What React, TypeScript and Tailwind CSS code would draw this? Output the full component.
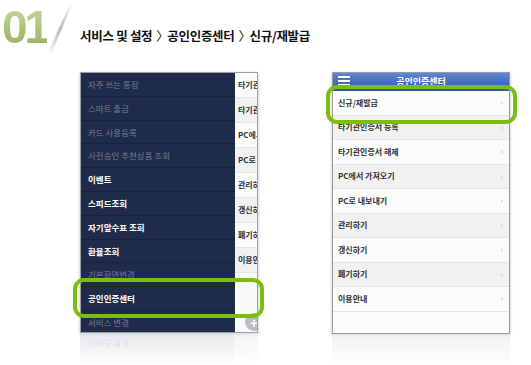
import React from "react"

const font = { fontFamily: '"Noto Sans CJK KR", "Noto Sans", sans-serif' }

// left side menu rows: [label, bold/white]
const sideMenu: [string, boolean][] = [
  ["자주 쓰는 통장", false],
  ["스마트 출금", false],
  ["카드 사용등록", false],
  ["사전승인 추천상품 조회", false],
  ["이벤트", true],
  ["스피드조회", true],
  ["자기앞수표 조회", true],
  ["환율조회", true],
  ["기본화면변경", false],
  ["공인인증센터", true],
  ["서비스 변경", false],
]

const stripRows = ["타기관", "타기관", "PC에서", "PC로", "관리하", "갱신하", "폐기하", "이용안"]

const certMenu = [
  "신규/재발급",
  "타기관인증서 등록",
  "타기관인증서 해제",
  "PC에서 가져오기",
  "PC로 내보내기",
  "관리하기",
  "갱신하기",
  "폐기하기",
  "이용안내",
]

function Highlight({ className }: { className: string }) {
  return (
    <div
      className={`pointer-events-none absolute rounded-[11px] border-[4px] border-[#7cbd12] ${className}`}
    />
  )
}

function Sep() {
  return <span className="mx-[4px] inline-block w-[7px] overflow-visible font-normal">〉</span>
}

export default function App() {
  return (
    <div className="relative h-[365px] w-[531px] overflow-hidden bg-white" style={font}>
      {/* ── Step heading ─────────────────────────────────────────────── */}
      <div className="flex h-[72px] items-start">
        <div className="relative h-[60px] w-[80px] shrink-0">
          <span
            className="absolute left-[2px] top-[4px] bg-gradient-to-b from-[#c8d8a0] to-[#94b158] bg-clip-text text-[46px] font-bold leading-[46px] tracking-[-3px] text-transparent"
            style={{ fontFamily: '"Liberation Sans", sans-serif' }}
          >
            01
          </span>
          <svg className="absolute left-[42px] top-0" width="36" height="56" viewBox="0 0 36 56">
            <defs>
              <linearGradient id="sl" x1="0" y1="1" x2="1" y2="0">
                <stop offset="0" stopColor="#ffffff" />
                <stop offset="0.5" stopColor="#b8b8b8" />
                <stop offset="1" stopColor="#ffffff" />
              </linearGradient>
            </defs>
            <polygon points="6,52 28,4 30,5 10,52" fill="url(#sl)" />
          </svg>
        </div>
        <div className="mt-[27px] text-[12.5px] font-bold tracking-[-0.3px] text-[#111]">
          서비스 및 설정
          <Sep />
          공인인증센터
          <Sep />
          신규/재발급
        </div>
      </div>

      {/* ── Phones ───────────────────────────────────────────────────── */}
      <div className="flex items-start">
        {/* left phone */}
        <div className="ml-[80px] w-[178px]">
          <div className="flex h-[261px] overflow-hidden border border-[#9aa0aa] shadow-[0_1px_3px_rgba(0,0,0,0.25)]">
            <div className="w-[154px] shrink-0 bg-[#1f2c49]">
              {sideMenu.map(([label, strong]) => (
                <div
                  key={label}
                  className={`flex h-[23.8px] items-center border-b border-[#17213a] pl-[7px] text-[8.5px] ${
                    strong ? "font-bold text-white" : "text-[#737d91]"
                  }`}
                >
                  {label}
                </div>
              ))}
            </div>
            <div className="relative flex-1 overflow-hidden bg-[#fafafa]">
              {stripRows.map((t, i) => (
                <div
                  key={i}
                  className={`flex h-[25px] items-center overflow-hidden whitespace-nowrap border-b border-[#e4e4e4] pl-[3px] text-[8px] font-bold text-[#333] ${
                    i % 2 === 1 ? "bg-[#f1f1f1]" : "bg-[#fbfbfb]"
                  }`}
                >
                  {t}
                </div>
              ))}
              <div className="absolute left-[10px] top-[240px] flex h-[18px] w-[18px] items-center justify-center rounded-full bg-[#b9bdc6] text-[13px] font-bold leading-none text-white">
                +
              </div>
            </div>
          </div>
          {/* reflection */}
          <div className="flex h-[32px] opacity-60">
            <div className="w-[154px] bg-gradient-to-b from-[#d9dbe0] to-white pl-[8px] pt-[4px] text-[8.5px] text-[#c4c8d0]">
              <span className="inline-block scale-y-[-1]">서비스 변경</span>
            </div>
            <div className="flex-1 bg-gradient-to-b from-[#eeeeee] to-white" />
          </div>
        </div>

        {/* right phone */}
        <div className="ml-[74px] w-[178px]">
          <div className="h-[262px] overflow-hidden border border-[#9a9a9a] bg-[#fbfbfb] shadow-[0_1px_3px_rgba(0,0,0,0.25)]">
            <div className="relative flex h-[18px] items-center justify-center bg-gradient-to-b from-[#5f86d2] to-[#2f58ad]">
              <div className="absolute left-[5px] top-[3px] flex flex-col gap-[2px]">
                <span className="block h-[2px] w-[12px] bg-white" />
                <span className="block h-[2px] w-[12px] bg-white" />
                <span className="block h-[2px] w-[12px] bg-white" />
              </div>
              <span className="text-[9px] font-bold text-white">공인인증센터</span>
            </div>
            {certMenu.map((t, i) => (
              <div
                key={t}
                className={`flex h-[24.5px] items-center justify-between border-b border-[#e6e6e6] pl-[5px] pr-[6px] text-[8px] font-bold text-[#333] ${
                  i % 2 === 1 ? "bg-[#f1f1f1]" : "bg-[#fbfbfb]"
                }`}
              >
                <span>{t}</span>
                <span className="text-[9px] font-normal text-[#c6c6c6]">›</span>
              </div>
            ))}
          </div>
          <div className="h-[32px] bg-gradient-to-b from-[#ececec] to-white opacity-70" />
        </div>
      </div>

      {/* ── Green highlights ─────────────────────────────────────────── */}
      <Highlight className="left-[73px] top-[278px] h-[40px] w-[191px]" />
      <Highlight className="left-[326px] top-[85px] h-[39px] w-[191px]" />
    </div>
  )
}
